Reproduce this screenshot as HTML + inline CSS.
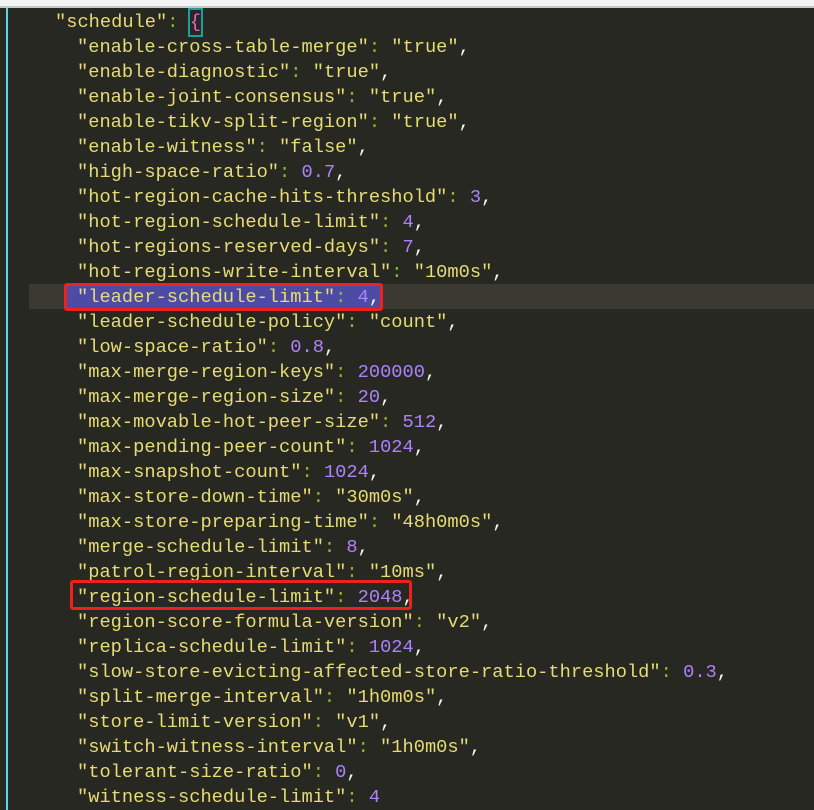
<!DOCTYPE html>
<html><head><style>
body{margin:0;width:814px;height:810px;background:#272822;overflow:hidden;position:relative;font-family:"Liberation Mono",monospace;}
.top{position:absolute;left:0;top:0;width:814px;height:6px;background:#f3f3f3;border-bottom:2px solid #c8c8c8;}
.gut{position:absolute;left:6px;top:8px;width:2px;height:802px;background:#5fd4ea;}
.l{position:absolute;left:0;height:25px;line-height:25px;font-size:18.72px;color:#e6db74;white-space:pre;}
.c{color:#a6d22e;opacity:.85}
.n{color:#ae81ff}
.w{color:#f8f8f2}
.hl{position:absolute;left:29px;top:284px;width:785px;height:25px;background:#3a3a33;}
.sel{position:absolute;left:67px;top:285px;width:313px;height:24px;background:#4c4ca6;}
.box{position:absolute;border:3px solid #f0201c;border-radius:3px;box-sizing:border-box;}
.br{display:inline-block;outline:2px solid #1aa0a0;color:#f060d0;}
</style></head><body>
<div class="top"></div>
<div class="gut"></div>
<div class="hl"></div>
<div class="sel"></div>
<div class="l" style="top:10px;left:55px">"schedule"<span class="c">:</span> <span class="br">{</span></div>
<div class="l" style="top:35px;left:77px">"enable-cross-table-merge"<span class="c">:</span> "true"<span class="w">,</span></div>
<div class="l" style="top:60px;left:77px">"enable-diagnostic"<span class="c">:</span> "true"<span class="w">,</span></div>
<div class="l" style="top:85px;left:77px">"enable-joint-consensus"<span class="c">:</span> "true"<span class="w">,</span></div>
<div class="l" style="top:110px;left:77px">"enable-tikv-split-region"<span class="c">:</span> "true"<span class="w">,</span></div>
<div class="l" style="top:135px;left:77px">"enable-witness"<span class="c">:</span> "false"<span class="w">,</span></div>
<div class="l" style="top:160px;left:77px">"high-space-ratio"<span class="c">:</span> <span class="n">0.7</span><span class="w">,</span></div>
<div class="l" style="top:185px;left:77px">"hot-region-cache-hits-threshold"<span class="c">:</span> <span class="n">3</span><span class="w">,</span></div>
<div class="l" style="top:210px;left:77px">"hot-region-schedule-limit"<span class="c">:</span> <span class="n">4</span><span class="w">,</span></div>
<div class="l" style="top:235px;left:77px">"hot-regions-reserved-days"<span class="c">:</span> <span class="n">7</span><span class="w">,</span></div>
<div class="l" style="top:260px;left:77px">"hot-regions-write-interval"<span class="c">:</span> "10m0s"<span class="w">,</span></div>
<div class="l" style="top:285px;left:77px">"leader-schedule-limit"<span class="c">:</span> <span class="n">4</span><span class="w">,</span></div>
<div class="l" style="top:310px;left:77px">"leader-schedule-policy"<span class="c">:</span> "count"<span class="w">,</span></div>
<div class="l" style="top:335px;left:77px">"low-space-ratio"<span class="c">:</span> <span class="n">0.8</span><span class="w">,</span></div>
<div class="l" style="top:360px;left:77px">"max-merge-region-keys"<span class="c">:</span> <span class="n">200000</span><span class="w">,</span></div>
<div class="l" style="top:385px;left:77px">"max-merge-region-size"<span class="c">:</span> <span class="n">20</span><span class="w">,</span></div>
<div class="l" style="top:410px;left:77px">"max-movable-hot-peer-size"<span class="c">:</span> <span class="n">512</span><span class="w">,</span></div>
<div class="l" style="top:435px;left:77px">"max-pending-peer-count"<span class="c">:</span> <span class="n">1024</span><span class="w">,</span></div>
<div class="l" style="top:460px;left:77px">"max-snapshot-count"<span class="c">:</span> <span class="n">1024</span><span class="w">,</span></div>
<div class="l" style="top:485px;left:77px">"max-store-down-time"<span class="c">:</span> "30m0s"<span class="w">,</span></div>
<div class="l" style="top:510px;left:77px">"max-store-preparing-time"<span class="c">:</span> "48h0m0s"<span class="w">,</span></div>
<div class="l" style="top:535px;left:77px">"merge-schedule-limit"<span class="c">:</span> <span class="n">8</span><span class="w">,</span></div>
<div class="l" style="top:560px;left:77px">"patrol-region-interval"<span class="c">:</span> "10ms"<span class="w">,</span></div>
<div class="l" style="top:585px;left:77px">"region-schedule-limit"<span class="c">:</span> <span class="n">2048</span><span class="w">,</span></div>
<div class="l" style="top:610px;left:77px">"region-score-formula-version"<span class="c">:</span> "v2"<span class="w">,</span></div>
<div class="l" style="top:635px;left:77px">"replica-schedule-limit"<span class="c">:</span> <span class="n">1024</span><span class="w">,</span></div>
<div class="l" style="top:660px;left:77px">"slow-store-evicting-affected-store-ratio-threshold"<span class="c">:</span> <span class="n">0.3</span><span class="w">,</span></div>
<div class="l" style="top:685px;left:77px">"split-merge-interval"<span class="c">:</span> "1h0m0s"<span class="w">,</span></div>
<div class="l" style="top:710px;left:77px">"store-limit-version"<span class="c">:</span> "v1"<span class="w">,</span></div>
<div class="l" style="top:735px;left:77px">"switch-witness-interval"<span class="c">:</span> "1h0m0s"<span class="w">,</span></div>
<div class="l" style="top:760px;left:77px">"tolerant-size-ratio"<span class="c">:</span> <span class="n">0</span><span class="w">,</span></div>
<div class="l" style="top:785px;left:77px">"witness-schedule-limit"<span class="c">:</span> <span class="n">4</span></div>
<div class="box" style="left:64px;top:283px;width:319px;height:28px"></div>
<div class="box" style="left:70px;top:580px;width:342px;height:30px"></div>
</body></html>
